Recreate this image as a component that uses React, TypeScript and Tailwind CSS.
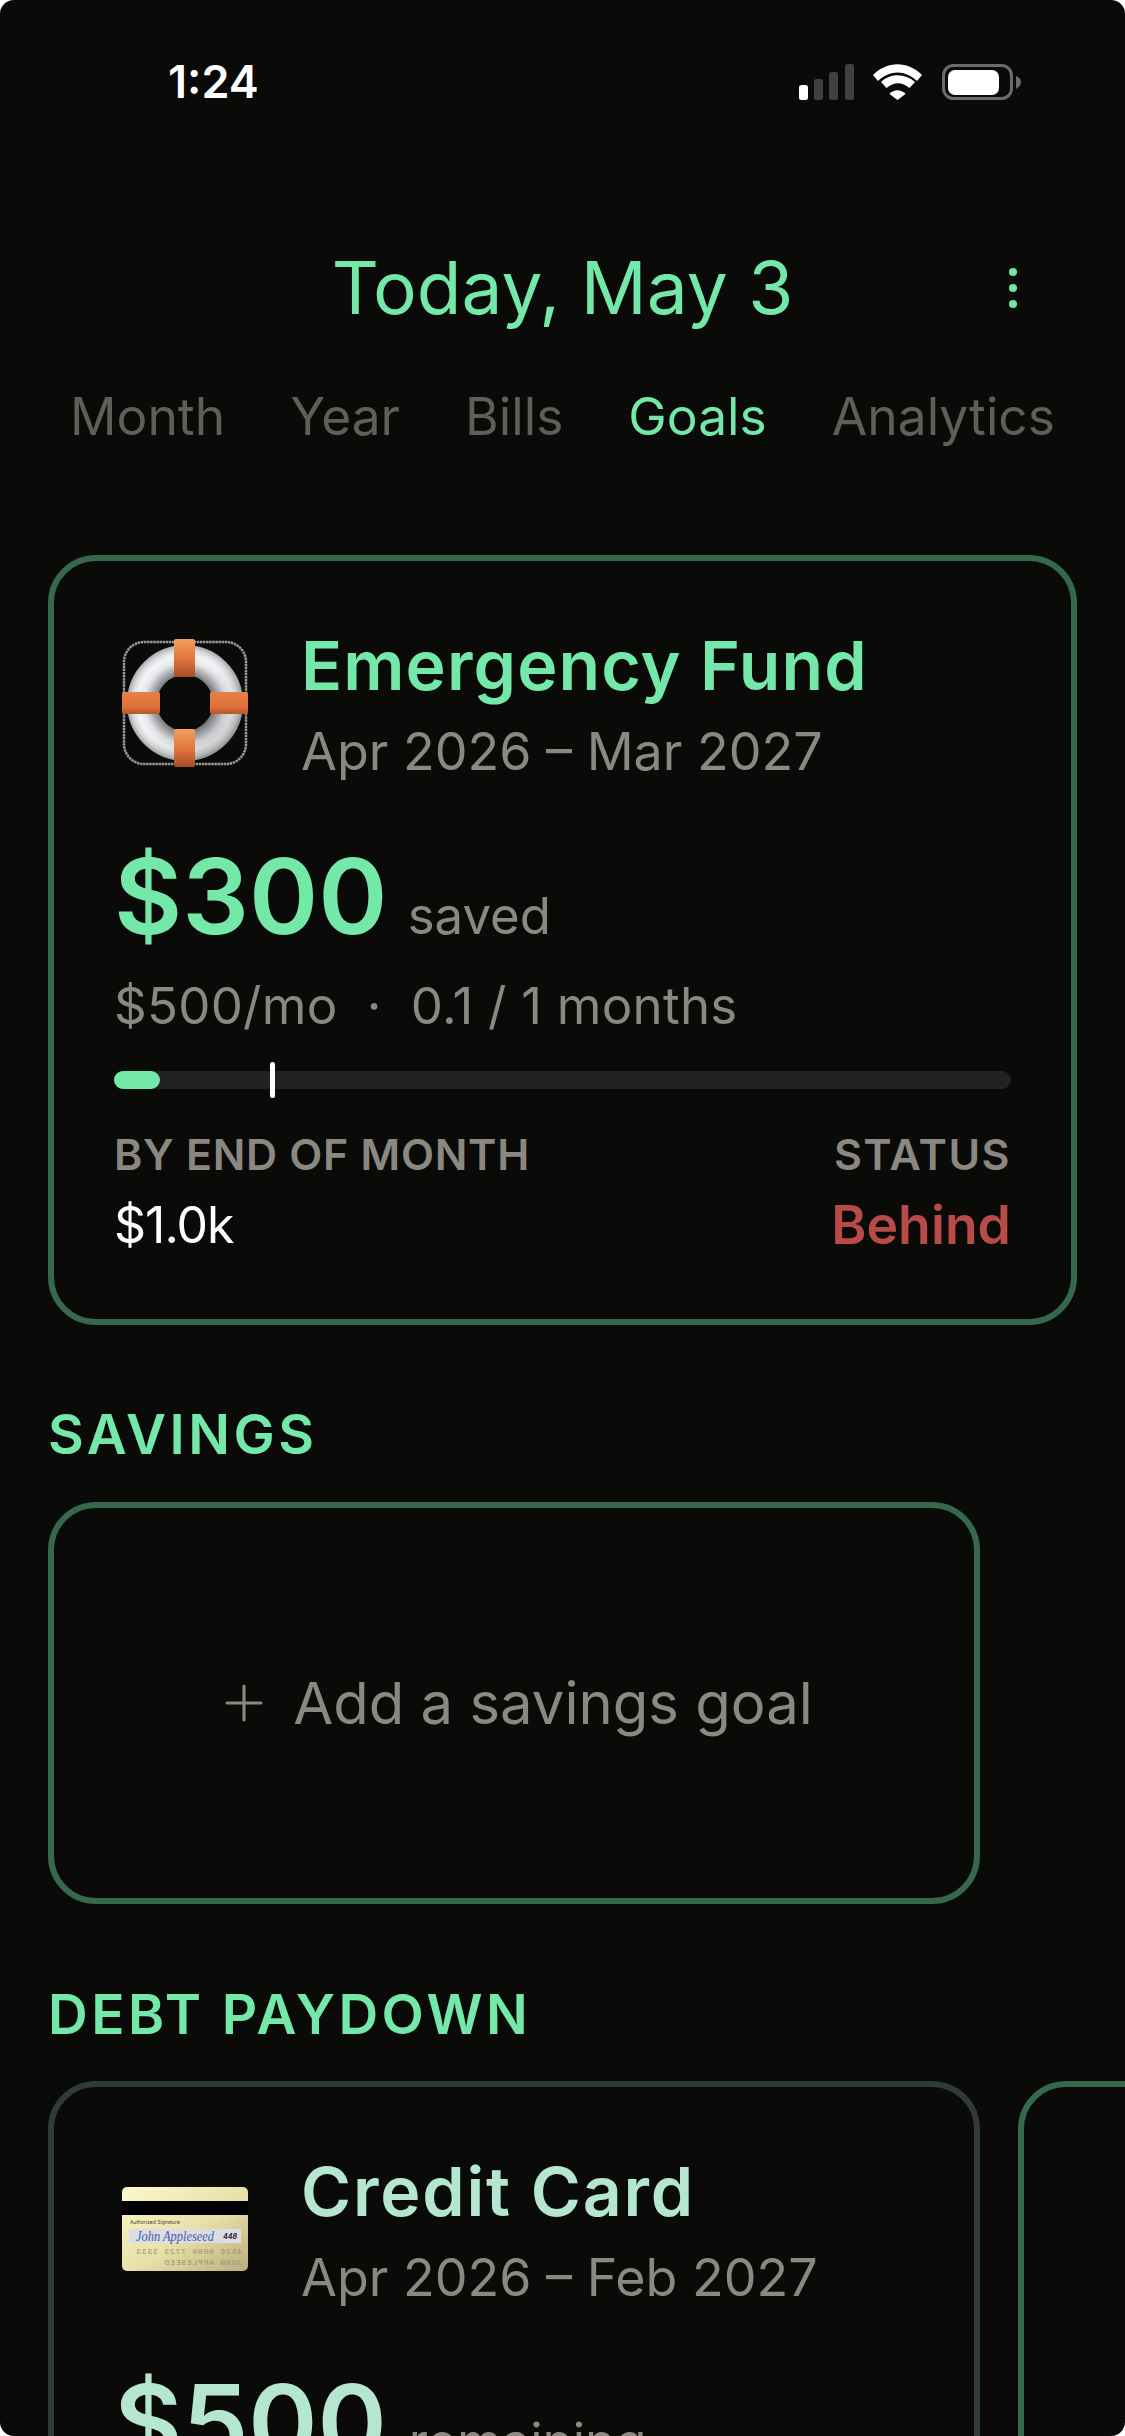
import { Plus } from 'lucide-react';

const green = '#74e8a8';

function StatusBar() {
  return (
    <div className="flex items-center justify-between h-[36px] pl-[168px] pr-[104px] pt-0 text-white">
      <span className="text-[45px] leading-[36px] font-semibold">1:24</span>
      <svg width="222" height="36" viewBox="0 0 222 36">
        <rect x="0" y="21" width="9" height="15" rx="2.5" fill="#fff" />
        <rect x="15" y="15" width="9" height="21" rx="2.5" fill="#404040" />
        <rect x="30" y="8" width="9" height="28" rx="2.5" fill="#404040" />
        <rect x="46" y="0" width="9" height="36" rx="2.5" fill="#404040" />
        <path d="M74 11 C88 -3.5 109 -3.5 123 11 L118 17 C106 5.5 91 5.5 79 17 Z" fill="#fff" />
        <path d="M82 18 C91 9 106 9 116 18 L110.5 24 C103 17.5 95 17.5 87.5 24 Z" fill="#fff" />
        <path d="M90.5 30 C95 25 102 25 106.5 30 L98.5 36 Z" fill="#fff" />
        <rect x="144.5" y="1.5" width="68" height="33" rx="10" fill="none" stroke="#6b6b6b" strokeWidth="3" />
        <rect x="149" y="6" width="51" height="25" rx="7" fill="#fff" />
        <path d="M217 12 C220 13 222 15 222 18 C222 21 220 23 217 25 Z" fill="#6b6b6b" />
      </svg>
    </div>
  );
}

function Lifebuoy() {
  return (
    <svg width="126" height="128" viewBox="0 0 126 128">
      <defs>
        <radialGradient id="ring" gradientUnits="userSpaceOnUse" cx="63" cy="64" r="58">
          <stop offset="48%" stopColor="#77797d" />
          <stop offset="57%" stopColor="#a4a6a9" />
          <stop offset="70%" stopColor="#e4e5e8" />
          <stop offset="82%" stopColor="#f4f5f7" />
          <stop offset="92%" stopColor="#d6d8db" />
          <stop offset="100%" stopColor="#a6a8ab" />
        </radialGradient>
        <linearGradient id="shade" x1="0" y1="0" x2="1" y2="1">
          <stop offset="45%" stopColor="#000" stopOpacity="0" />
          <stop offset="100%" stopColor="#000" stopOpacity="0.16" />
        </linearGradient>
        <linearGradient id="bandV" x1="0" y1="0" x2="0" y2="1">
          <stop offset="0%" stopColor="#f2a05e" />
          <stop offset="55%" stopColor="#e0733c" />
          <stop offset="100%" stopColor="#a84d25" />
        </linearGradient>
        <linearGradient id="bandH" x1="0" y1="0" x2="0" y2="1">
          <stop offset="0%" stopColor="#e88048" />
          <stop offset="70%" stopColor="#dd7038" />
          <stop offset="100%" stopColor="#b9562a" />
        </linearGradient>
      </defs>
      <rect x="2" y="3" width="122" height="122" rx="20" fill="none" stroke="#989898" strokeWidth="2.5" strokeDasharray="2.5 0.6" />
      <circle cx="63" cy="64" r="43" fill="none" stroke="url(#ring)" strokeWidth="30" />
      <circle cx="63" cy="64" r="43" fill="none" stroke="url(#shade)" strokeWidth="30" />
      <rect x="52" y="0" width="21" height="38" rx="2" fill="url(#bandV)" />
      <rect x="52" y="90" width="21" height="38" rx="2" fill="url(#bandV)" />
      <rect x="0" y="53" width="38" height="22" rx="2" fill="url(#bandH)" />
      <rect x="88" y="53" width="38" height="22" rx="2" fill="url(#bandH)" />
    </svg>
  );
}

function CreditCardIcon() {
  return (
    <svg width="126" height="84" viewBox="0 0 126 84">
      <defs>
        <linearGradient id="gold" x1="0" y1="0" x2="1" y2="1">
          <stop offset="0%" stopColor="#fdf9c9" />
          <stop offset="55%" stopColor="#e8dfa8" />
          <stop offset="100%" stopColor="#b9ad7d" />
        </linearGradient>
      </defs>
      <rect x="0" y="0" width="126" height="84" rx="5" fill="url(#gold)" />
      <rect x="0" y="14" width="126" height="14" fill="#000" />
      <text x="8" y="37" fontSize="5" fontFamily="Inter, sans-serif" fill="#4a4636">Authorized Signature</text>
      <rect x="7" y="42" width="112" height="14" fill="#dcdce4" />
      <text x="14" y="54" fontSize="14" fontStyle="italic" fontFamily="'Liberation Serif', serif" fill="#3f5fa8" textLength="78" lengthAdjust="spacingAndGlyphs">John Appleseed</text>
      <text x="101" y="52" fontSize="7" fontWeight="700" fontStyle="italic" fontFamily="Inter, sans-serif" fill="#222">448</text>
      <g transform="translate(120 0) scale(-1 1)">
        <text x="0" y="67" fontSize="8" letterSpacing="0.8" fontFamily="'Liberation Mono', monospace" fill="#9a916a">4526 0000 7723 3333</text>
        <text x="0" y="78" fontSize="8" letterSpacing="0.8" fontFamily="'Liberation Mono', monospace" fill="#9a916a">JOHN APPLESEED</text>
      </g>
    </svg>
  );
}

function CardHead({ icon, name, dates, color, tracking }: { icon: React.ReactNode; name: string; dates: string; color: string; tracking: string }) {
  return (
    <div className="flex items-center">
      <div className="w-[126px] flex justify-center ml-[8px] mr-[53px] mb-[3px]">{icon}</div>
      <div>
        <div className={`text-[68px] leading-[84px] font-semibold ${tracking}`} style={{ color }}>{name}</div>
        <div className="mt-[11px] text-[52px] leading-[68px] text-[#8a8880]">{dates}</div>
      </div>
    </div>
  );
}

function GoalCard({ border, children, className }: { border: string; children: React.ReactNode; className: string }) {
  return <div className={`${className} h-[770px] rounded-[48px] border-[6px] px-[60px] pt-[62px] ${border}`}>{children}</div>;
}

export default function App() {
  return (
    <div className="w-[1125px] h-[2436px] bg-white">
      <div className="w-full h-full overflow-hidden rounded-[14px] bg-[#0a0a09] pt-[64px] font-['Inter',sans-serif]">
        <StatusBar />

        <div className="relative flex justify-center mt-[140px] text-[73px] leading-[96px]" style={{ color: green }}>
          Today, May 3
          <div className="absolute right-[108px] top-1/2 -translate-y-1/2 flex flex-col gap-[8px]">
            <span className="block w-[8px] h-[8px] rounded-full bg-[#74e8a8]" />
            <span className="block w-[8px] h-[8px] rounded-full bg-[#74e8a8]" />
            <span className="block w-[8px] h-[8px] rounded-full bg-[#74e8a8]" />
          </div>
        </div>

        <div className="flex justify-between px-[70px] mt-[48px] text-[51.5px] leading-[64px] text-[#5f5e58]">
          <span>Month</span>
          <span>Year</span>
          <span>Bills</span>
          <span className="text-[#74e8a8]">Goals</span>
          <span>Analytics</span>
        </div>

        <div className="mx-[48px] mt-[107px]">
          <GoalCard className="w-full" border="border-[#35684d]">
            <CardHead icon={<Lifebuoy />} name="Emergency Fund" dates="Apr 2026 – Mar 2027" color={green} tracking="tracking-[1.1px]" />
            <div className="flex items-baseline mt-[55px]">
              <span className="text-[105px] leading-[110px] font-semibold text-[#74e8a8]">$300</span>
              <span className="ml-[20px] text-[51px] leading-none text-[#8a8880]">saved</span>
            </div>
            <div className="mt-[23px] text-[51px] leading-[64px] tracking-[0.25px] text-[#8a8880]">$500/mo&nbsp; ·&nbsp; 0.1 / 1 months</div>
            <div className="relative mt-[33px] h-[18px] rounded-full bg-[#222221]">
              <div className="h-full w-[46px] rounded-full bg-[#74e8a8]" />
              <div className="absolute left-[156px] top-[-9px] w-[5px] h-[36px] rounded-full bg-white" />
            </div>
            <div className="flex justify-between mt-[37px]">
              <div>
                <div className="text-[43px] leading-[56px] font-semibold tracking-[0.7px] text-[#8a8880]">BY END OF MONTH</div>
                <div className="mt-[15px] text-[50px] leading-[56px] tracking-[-1px] text-white">$1.0k</div>
              </div>
              <div className="text-right">
                <div className="text-[43px] leading-[56px] font-semibold tracking-[1.5px] text-[#8a8880]">STATUS</div>
                <div className="mt-[15px] text-[53.5px] leading-[56px] font-semibold text-[#b84a48]">Behind</div>
              </div>
            </div>
          </GoalCard>
        </div>

        <div className="ml-[48px] mt-[77px] text-[55px] leading-[64px] font-semibold tracking-[3.5px] text-[#74e8a8]">SAVINGS</div>

        <div className="ml-[48px] mt-[36px] w-[932px] h-[402px] rounded-[48px] border-[6px] border-[#35684d] flex items-center justify-center text-[58px] text-[#8a8880]">
          <Plus size={58} strokeWidth={1.3} className="mr-[20px]" />
          <span>Add a savings goal</span>
        </div>

        <div className="ml-[48px] mt-[78px] text-[55px] leading-[64px] font-semibold tracking-[3.5px] text-[#74e8a8]">DEBT PAYDOWN</div>

        <div className="flex gap-[38px] pl-[48px] mt-[35px]">
          <GoalCard className="shrink-0 w-[932px]" border="border-[#2f3b34]">
            <CardHead icon={<CreditCardIcon />} name="Credit Card" dates="Apr 2026 – Feb 2027" color="#b5e6d2" tracking="tracking-[1.8px]" />
            <div className="flex items-baseline mt-[55px]">
              <span className="text-[105px] leading-[110px] font-semibold text-[#b5e6d2]">$500</span>
              <span className="ml-[22px] text-[51px] leading-none text-[#8a8880]">remaining</span>
            </div>
          </GoalCard>
          <GoalCard className="shrink-0 w-[932px]" border="border-[#35684d]">
            <span />
          </GoalCard>
        </div>
      </div>
    </div>
  );
}
